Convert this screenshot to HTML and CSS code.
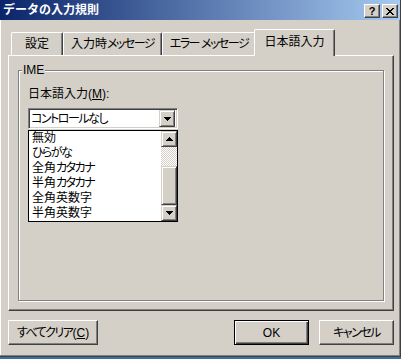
FILE: index.html
```html
<!DOCTYPE html>
<html lang="ja">
<head>
  <meta charset="UTF-8" />
  <title>データの入力規則</title>
  <link rel="stylesheet" href="styles.css">
</head>
<body>
  <div class="window">
    <div class="titlebar">
      <span class="title">データの入力規則</span>
      <div class="caption-buttons">
        <span class="cap-btn help">?</span>
        <span class="cap-btn close">
          <svg width="8" height="7" viewBox="0 0 8 7" shape-rendering="crispEdges">
            <path d="M0 0h2v1H0zM6 0h2v1H6zM1 1h2v1H1zM5 1h2v1H5zM2 2h4v1H2zM3 3h2v1H3zM2 4h4v1H2zM1 5h2v1H1zM5 5h2v1H5zM0 6h2v1H0zM6 6h2v1H6z" fill="#000"/>
          </svg>
        </span>
      </div>
    </div>

    <div class="content">
      <div class="tabs">
        <div class="tab tab-1">設定</div>
        <div class="tab tab-2">入力時<span class="kana">メッセージ</span></div>
        <div class="tab tab-3"><span class="kana">エラー</span> <span class="kana">メッセージ</span></div>
        <div class="tab active">日本語入力</div>
      </div>

      <div class="panel">
        <fieldset class="group">
          <legend>IME</legend>
          <div class="field-label">日本語入力(<u>M</u>):</div>

          <div class="combo">
            <span class="combo-text"><span class="kana">コントロールなし</span></span>
            <span class="drop-btn">
              <svg width="7" height="4" viewBox="0 0 7 4" shape-rendering="crispEdges">
                <path d="M0 0h7v1H0zM1 1h5v1H1zM2 2h3v1H2zM3 3h1v1H3z" fill="#000"/>
              </svg>
            </span>
          </div>

          <div class="listbox">
            <ul class="items">
              <li>無効</li>
              <li><span class="kana">ひらがな</span></li>
              <li>全角<span class="kana">カタカナ</span></li>
              <li>半角<span class="kana">カタカナ</span></li>
              <li>全角英数字</li>
              <li>半角英数字</li>
            </ul>
            <div class="scrollbar">
              <span class="sb-btn">
                <svg width="7" height="4" viewBox="0 0 7 4" shape-rendering="crispEdges">
                  <path d="M3 0h1v1H3zM2 1h3v1H2zM1 2h5v1H1zM0 3h7v1H0z" fill="#000"/>
                </svg>
              </span>
              <span class="sb-track"></span>
              <span class="sb-thumb"></span>
              <span class="sb-btn">
                <svg width="7" height="4" viewBox="0 0 7 4" shape-rendering="crispEdges">
                  <path d="M0 0h7v1H0zM1 1h5v1H1zM2 2h3v1H2zM3 3h1v1H3z" fill="#000"/>
                </svg>
              </span>
            </div>
          </div>
        </fieldset>
      </div>

      <div class="footer">
        <button class="btn btn-clear"><span class="kana">すべてクリア</span>(<u>C</u>)</button>
        <button class="btn btn-ok">OK</button>
        <button class="btn btn-cancel"><span class="kana">キャンセル</span></button>
      </div>
    </div>
  </div>
</body>
</html>
```

FILE: styles.css
```css
* {
  margin: 0;
  padding: 0;
  box-sizing: border-box;
}

body {
  width: 401px;
  height: 359px;
  overflow: hidden;
  font-family: "Liberation Sans", "Noto Sans CJK JP", sans-serif;
  font-size: 12px;
  color: #000;
  background-color: #3a6ea5;
}

/* kana in the dialog font runs narrower than full width */
.kana {
  font-feature-settings: "palt";
  letter-spacing: -1.5px;
}

.kana + .kana {
  margin-left: 2px;
}

.window {
  height: 357px;
  display: flex;
  flex-direction: column;
  background-color: #d4d0c8;
  border-right: 1px solid #404040;
  border-bottom: 1px solid #404040;
  box-shadow: inset -1px -1px 0 #808080, inset 1px 0 0 #fff;
}

/* title bar */
.titlebar {
  height: 20px;
  flex: none;
  display: flex;
  align-items: center;
  justify-content: space-between;
  padding: 0 2px 0 3px;
  background: linear-gradient(to right, #0a246a, #a6caf0);
  color: #fff;
  font-weight: bold;
  font-size: 12px;
  line-height: 14px;
}

.caption-buttons {
  display: flex;
  gap: 2px;
  margin-top: 2px;
}

.cap-btn {
  width: 16px;
  height: 14px;
  display: flex;
  align-items: center;
  justify-content: center;
  background-color: #d4d0c8;
  border-top: 1px solid #fff;
  border-left: 1px solid #fff;
  border-right: 1px solid #404040;
  border-bottom: 1px solid #404040;
  box-shadow: inset -1px -1px 0 #808080;
  color: #000;
  font-weight: bold;
  font-size: 11px;
  line-height: 1;
}

/* dialog content */
.content {
  flex: 1;
  display: flex;
  flex-direction: column;
  padding: 9px 6px 0 8px;
}

.tabs {
  height: 26px;
  display: flex;
  align-items: flex-end;
  padding-left: 3px;
}

.tab {
  height: 23px;
  display: flex;
  align-items: center;
  justify-content: center;
  border-top: 1px solid #fff;
  border-left: 1px solid #fff;
  border-right: 1px solid #404040;
  box-shadow: inset -1px 0 0 #808080;
  border-radius: 2px 2px 0 0;
  line-height: 14px;
  white-space: pre;
}

.tab-1 { width: 52px; }
.tab-2 { width: 99px; }
.tab-3 { width: 94px; }

.tab.active {
  position: relative;
  z-index: 1;
  width: 81px;
  height: 27px;
  margin-left: -2px;
  margin-bottom: -1px;
  padding-bottom: 2px;
  background-color: #d4d0c8;
}

.panel {
  height: 256px;
  display: flex;
  flex-direction: column;
  padding: 0 0 9px 9px;
  border-top: 1px solid #fff;
  border-left: 1px solid #fff;
  border-right: 1px solid #404040;
  border-bottom: 1px solid #404040;
  box-shadow: inset -1px -1px 0 #808080;
}

.group {
  flex: 1;
  width: 366px;
  margin-top: 7px;
  padding: 0 9px;
  border: 1px solid #808080;
  box-shadow: 1px 1px 0 #fff, inset 1px 1px 0 #fff;
}

.group legend {
  margin-left: -6px;
  padding: 0 1px;
  line-height: 14px;
  background-color: #d4d0c8;
}

.field-label {
  margin-top: 10px;
  line-height: 14px;
}

/* combo box */
.combo {
  width: 150px;
  height: 21px;
  margin-top: 7px;
  display: flex;
  align-items: center;
  background-color: #fff;
  border-top: 1px solid #808080;
  border-left: 1px solid #808080;
  border-right: 1px solid #fff;
  border-bottom: 1px solid #fff;
  box-shadow: inset 1px 1px 0 #404040, inset -1px -1px 0 #d4d0c8;
  padding: 2px;
}

.combo-text {
  flex: 1;
  line-height: 14px;
}

.drop-btn,
.sb-btn {
  width: 16px;
  height: 16px;
  display: flex;
  align-items: center;
  justify-content: center;
  background-color: #d4d0c8;
  border-top: 1px solid #d4d0c8;
  border-left: 1px solid #d4d0c8;
  border-right: 1px solid #404040;
  border-bottom: 1px solid #404040;
  box-shadow: inset 1px 1px 0 #fff, inset -1px -1px 0 #808080;
}

.drop-btn {
  height: 17px;
}

/* dropped list */
.listbox {
  width: 150px;
  height: 92px;
  margin-top: 1px;
  display: flex;
  background-color: #fff;
  border: 1px solid #000;
}

.items {
  flex: 1;
  list-style: none;
}

.items li {
  height: 15px;
  line-height: 15px;
  padding-left: 3px;
  white-space: nowrap;
}

.scrollbar {
  width: 16px;
  display: flex;
  flex-direction: column;
}

.sb-track {
  height: 19px;
  background: repeating-conic-gradient(#fff 0 25%, #d4d0c8 0 50%) 0 0 / 2px 2px;
}

.sb-thumb {
  height: 39px;
  background-color: #d4d0c8;
  border-top: 1px solid #d4d0c8;
  border-left: 1px solid #d4d0c8;
  border-right: 1px solid #404040;
  border-bottom: 1px solid #404040;
  box-shadow: inset 1px 1px 0 #fff, inset -1px -1px 0 #808080;
}

/* buttons */
.footer {
  display: flex;
  align-items: center;
  gap: 10px;
  margin-top: 9px;
}

.btn {
  height: 25px;
  width: 75px;
  font-family: inherit;
  font-size: 12px;
  font-weight: normal;
  line-height: 14px;
  color: #000;
  background-color: #d4d0c8;
  border-top: 1px solid #fff;
  border-left: 1px solid #fff;
  border-right: 1px solid #404040;
  border-bottom: 1px solid #404040;
  box-shadow: inset -1px -1px 0 #808080;
}

.btn-clear {
  width: 90px;
  margin-right: auto;
}

.btn-ok {
  border: 1px solid #000;
  box-shadow: inset 1px 1px 0 #fff, inset -1px -1px 0 #404040, inset -2px -2px 0 #808080;
}
```
